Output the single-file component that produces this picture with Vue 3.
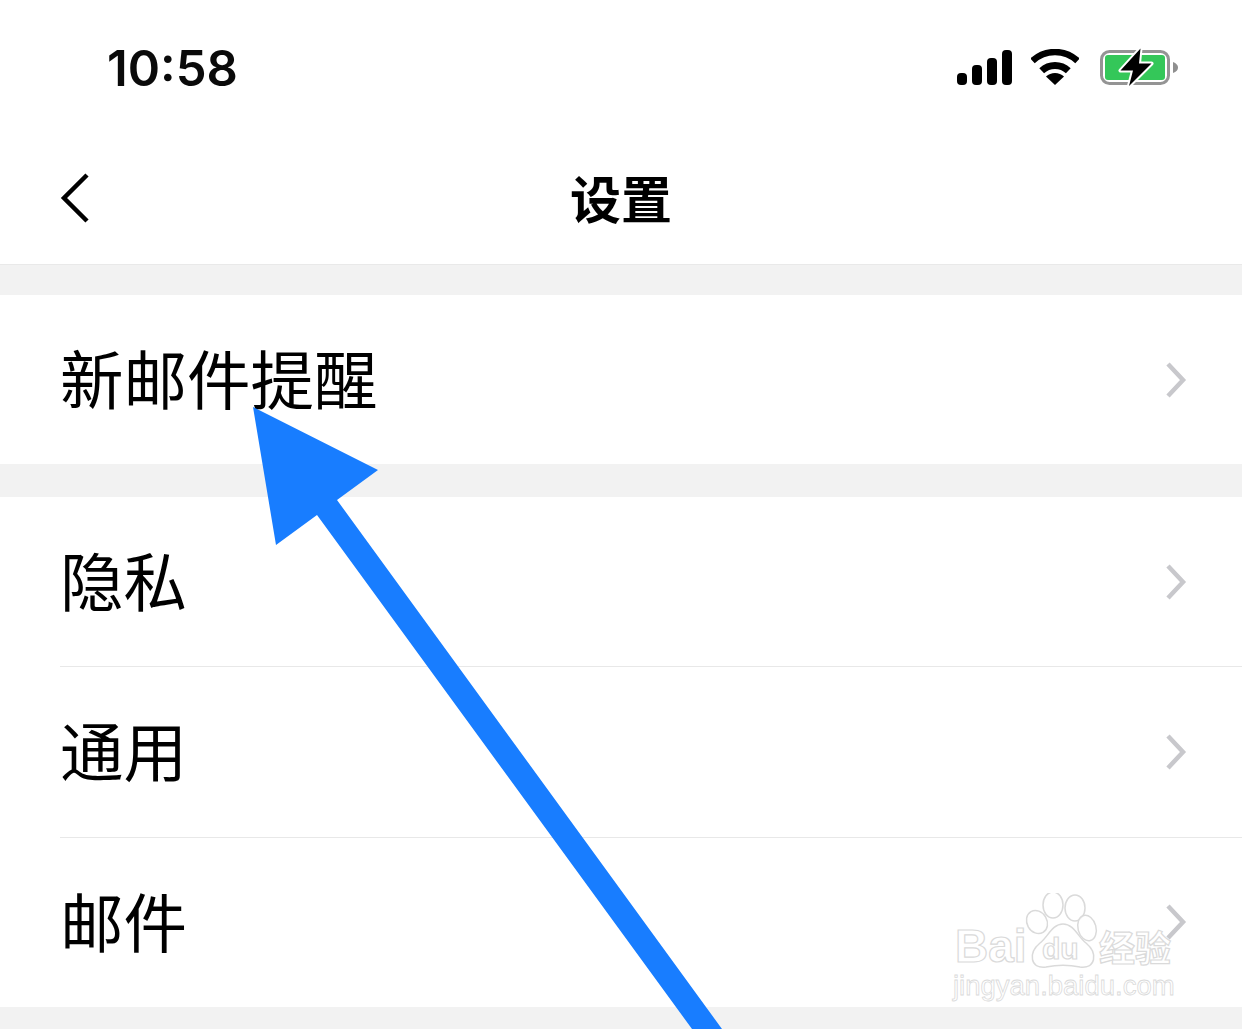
<script setup>
const firstGroup = ['新邮件提醒']
const secondGroup = [
  { name: '隐私', cls: 'h169' },
  { name: '通用', cls: 'h171' },
  { name: '邮件', cls: 'h170' }
]
</script>

<template>
  <div class="screen">
    <div class="status">
      <span class="time">10:58</span>
      <div class="indicators">
        <svg class="signal" width="56" height="36" viewBox="0 0 56 36">
          <rect x="1" y="23" width="10" height="12" rx="4" />
          <rect x="16" y="15" width="10" height="20" rx="4" />
          <rect x="31" y="8" width="10" height="27" rx="4" />
          <rect x="46" y="0" width="10" height="35" rx="4" />
        </svg>
        <svg class="wifi" width="48" height="36" viewBox="0 0 48 36">
          <path d="M1.500 11.900 A33 33 0 0 1 46.500 11.900" fill="none" stroke="#000" stroke-width="6.500" />
          <path d="M10.700 21.700 A19.500 19.500 0 0 1 37.300 21.700" fill="none" stroke="#000" stroke-width="7" />
          <path d="M24 36 L15 27.500 A13 13 0 0 1 33 27.500 Z" fill="#000" />
        </svg>
        <svg class="battery" width="80" height="42" viewBox="0 0 80 42">
          <rect x="3.500" y="4.500" width="67" height="32" rx="8" fill="#fff" stroke="#949494" stroke-width="3" />
          <rect x="7" y="8" width="60" height="25" rx="3" fill="#34c759" />
          <path d="M75 15 Q80 17 80 20.500 Q80 24 75 26 Z" fill="#8f8f8f" />
          <path d="M42.500 1.500 L22.500 23.500 L35 23.500 L31 39 L53.500 16.500 L41 16.500 Z" fill="#000" stroke="#fff" stroke-width="4" stroke-linejoin="round" paint-order="stroke" />
        </svg>
      </div>
    </div>

    <header class="nav">
      <svg class="back" width="32" height="52" viewBox="0 0 32 52">
        <path d="M28 3 L5 26 L28 49" fill="none" stroke="#000" stroke-width="4.500" />
      </svg>
      <h1 class="title">设置</h1>
    </header>

    <section class="group first">
      <div v-for="item in firstGroup" :key="item" class="row">
        <span class="label">{{ item }}</span>
        <svg class="chevron" width="22" height="36" viewBox="0 0 22 36">
          <path d="M3 2 L18 18 L3 34" fill="none" stroke="#c8c8cc" stroke-width="4.500" />
        </svg>
      </div>
    </section>

    <section class="group second">
      <div v-for="item in secondGroup" :key="item.name" class="row divided" :class="item.cls">
        <span class="label">{{ item.name }}</span>
        <svg class="chevron" width="22" height="36" viewBox="0 0 22 36">
          <path d="M3 2 L18 18 L3 34" fill="none" stroke="#c8c8cc" stroke-width="4.500" />
        </svg>
      </div>
    </section>

    <svg class="arrow" width="1242" height="1029" viewBox="0 0 1242 1029">
      <polygon points="253,407 378,470 337,500 722,1029 692,1029 317,515 276,545" fill="#187dff" />
    </svg>

    <div class="watermark">
      <svg class="paw" width="88" height="92" viewBox="0 0 88 92">
        <g fill="#fff" fill-opacity="0.8" stroke="#dadada" stroke-width="1.500">
          <ellipse cx="17" cy="29" rx="10" ry="12" transform="rotate(-30 17 29)" />
          <ellipse cx="33" cy="12" rx="10" ry="13" />
          <ellipse cx="55" cy="15" rx="10" ry="13" />
          <ellipse cx="67" cy="35" rx="9" ry="13" transform="rotate(-15 67 35)" />
          <path d="M43 31 C54 31 58 44 66 50 C78 60 76 76 60 74 C50 72 36 72 26 74 C10 76 8 60 20 50 C28 44 32 31 43 31 Z" />
        </g>
      </svg>
      <span class="mark-bai">Bai</span>
      <span class="mark-du">du</span>
      <span class="mark-jy">经验</span>
      <span class="mark-url">jingyan.baidu.com</span>
    </div>
  </div>
</template>

<style>
html,
body {
  margin: 0;
  background: #fff;
  overflow: hidden;
}
</style>

<style scoped>
.screen {
  position: relative;
  width: 1242px;
  height: 1029px;
  overflow: hidden;
  background: #f2f2f2;
  font-family: "Noto Sans CJK SC", "Liberation Sans", sans-serif;
  color: #000;
}
.status {
  height: 130px;
  background: #fff;
  display: flex;
  justify-content: space-between;
  padding: 0 64px 0 107px;
  box-sizing: border-box;
}
.time {
  margin-top: 37px;
  font-family: Inter, "Liberation Sans", sans-serif;
  font-size: 49px;
  line-height: 64px;
  font-weight: 600;
  height: 64px;
  color: #0a0a0a;
}
.indicators {
  display: flex;
  align-items: flex-start;
  gap: 19px;
  margin-top: 47px;
}
.signal {
  margin-top: 3px;
}
.wifi {
  margin-top: 2px;
}
.signal rect {
  fill: #000;
}
.nav {
  height: 135px;
  background: #fff;
  border-bottom: 1px solid #e9e9e9;
  box-sizing: border-box;
  display: flex;
  align-items: center;
  justify-content: center;
  position: relative;
}
.back {
  position: absolute;
  left: 59px;
  top: 42px;
}
.title {
  margin: 0;
  font-size: 51px;
  font-weight: 700;
  line-height: 70px;
}
.group {
  background: #fff;
}
.first {
  margin-top: 30px;
}
.second {
  margin-top: 33px;
}
.row {
  height: 169px;
  display: flex;
  align-items: center;
  justify-content: space-between;
  padding: 0 55px 0 60px;
  box-sizing: border-box;
  position: relative;
}
.h169 {
  height: 169px;
}
.h171 {
  height: 171px;
}
.h170 {
  height: 170px;
}
.h170 .label {
  margin-top: -6px;
}
.divided + .divided::before {
  content: "";
  position: absolute;
  left: 60px;
  right: 0;
  top: 0;
  height: 1px;
  background: #e8e8e8;
}
.label {
  font-size: 63.500px;
  line-height: 80px;
  margin-top: -8px;
}
.chevron {
  flex: none;
}
.arrow {
  position: absolute;
  left: 0;
  top: 0;
}
.watermark {
  position: absolute;
  left: 950px;
  top: 893px;
  width: 230px;
  height: 112px;
  color: #fff;
  font-family: "Liberation Sans", sans-serif;
  white-space: nowrap;
}
.paw {
  position: absolute;
  left: 70px;
  top: 0;
}
.mark-bai,
.mark-du,
.mark-jy,
.mark-url {
  position: absolute;
  -webkit-text-stroke: 1.2px #dadada;
}
.mark-bai {
  left: 5px;
  top: 30px;
  font-size: 46px;
  line-height: 46px;
  font-weight: 700;
}
.mark-du {
  left: 92px;
  top: 41px;
  font-size: 30px;
  line-height: 30px;
  font-weight: 700;
}
.mark-jy {
  left: 149px;
  top: 34px;
  font-family: "Noto Sans CJK SC", sans-serif;
  font-size: 36px;
  line-height: 38px;
  font-weight: 700;
}
.mark-url {
  left: 3px;
  top: 78px;
  font-size: 27.500px;
  line-height: 30px;
  -webkit-text-stroke: 0.8px #dadada;
}
</style>
